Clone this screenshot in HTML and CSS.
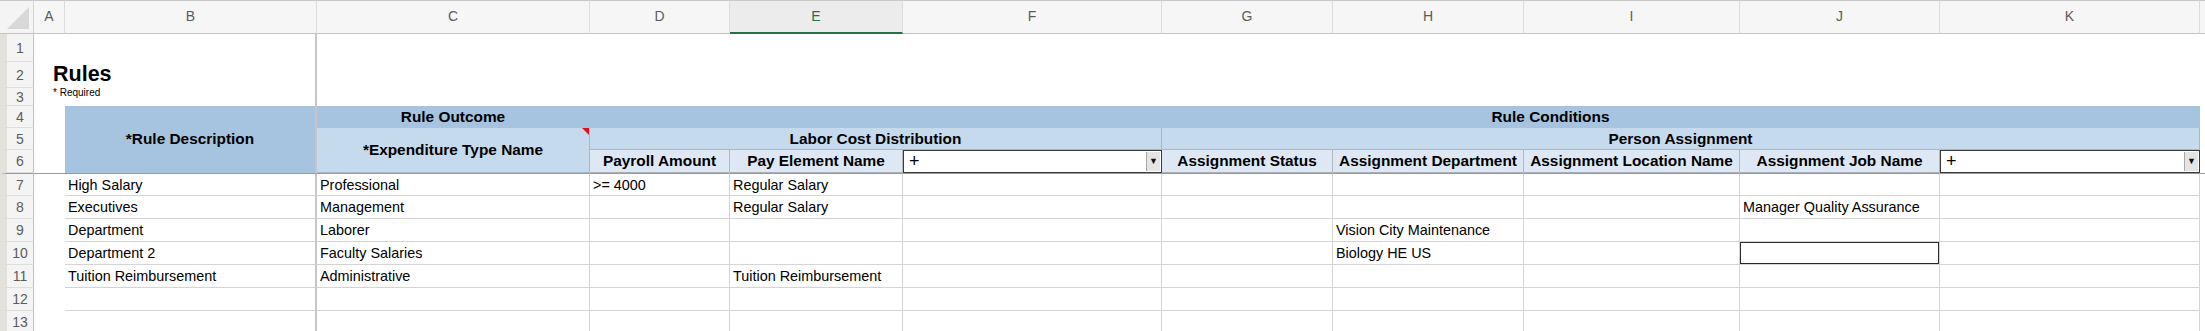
FILE: index.html
```html
<!DOCTYPE html>
<html lang="en">
<head>
  <meta charset="UTF-8" />
  <title>Rules</title>
  <link rel="stylesheet" href="styles.css">
</head>
<body>
  <div class="sheet" id="sheet">
    <!-- column letters -->
    <div class="corner"><span class="corner-tri"></span></div>
    <div class="col-hdr">A</div>
    <div class="col-hdr">B</div>
    <div class="col-hdr">C</div>
    <div class="col-hdr">D</div>
    <div class="col-hdr sel">E</div>
    <div class="col-hdr">F</div>
    <div class="col-hdr">G</div>
    <div class="col-hdr">H</div>
    <div class="col-hdr">I</div>
    <div class="col-hdr">J</div>
    <div class="col-hdr">K</div>
    <div class="col-hdr end"></div>

    <!-- row 1 -->
    <div class="row-hdr">1</div>
    <div class="blank"></div><div class="blank frz"></div><div class="blank wide"></div>

    <!-- row 2 -->
    <div class="row-hdr">2</div>
    <div class="blank"><span class="title">Rules</span></div><div class="blank frz"></div><div class="blank wide"></div>

    <!-- row 3 -->
    <div class="row-hdr">3</div>
    <div class="blank"><span class="required">* Required</span></div><div class="blank frz"></div><div class="blank wide"></div>

    <!-- row 4 -->
    <div class="row-hdr">4</div>
    <div class="blank"></div>
    <div class="head dark frz tall3">*Rule Description</div>
    <div class="head dark">Rule Outcome</div>
    <div class="head dark span3"></div>
    <div class="head dark span4">Rule Conditions</div>
    <div class="head dark"></div>
    <div class="blank"></div>

    <!-- row 5 -->
    <div class="row-hdr">5</div>
    <div class="blank"></div>
    <div class="head mid tall2 comment">*Expenditure Type Name</div>
    <div class="head mid span3">Labor Cost Distribution</div>
    <div class="head mid span5">Person Assignment</div>
    <div class="blank"></div>

    <!-- row 6 -->
    <div class="row-hdr">6</div>
    <div class="blank"></div>
    <div class="head light">Payroll Amount</div>
    <div class="head light">Pay Element Name</div>
    <div class="picker"><span>+</span><span class="arrow">&#9660;</span></div>
    <div class="head light">Assignment Status</div>
    <div class="head light">Assignment Department</div>
    <div class="head light">Assignment Location Name</div>
    <div class="head light">Assignment Job Name</div>
    <div class="picker"><span>+</span><span class="arrow">&#9660;</span></div>
    <div class="blank"></div>
  </div>

  <script>
    // lignes de données (colonnes B..K)
    const rows = [
      ["High Salary", "Professional", ">= 4000", "Regular Salary", "", "", "", "", "", ""],
      ["Executives", "Management", "", "Regular Salary", "", "", "", "", "Manager Quality Assurance", ""],
      ["Department", "Laborer", "", "", "", "", "Vision City Maintenance", "", "", ""],
      ["Department 2", "Faculty Salaries", "", "", "", "", "Biology HE US", "", "", ""],
      ["Tuition Reimbursement", "Administrative", "", "Tuition Reimbursement", "", "", "", "", "", ""],
      ["", "", "", "", "", "", "", "", "", ""],
      ["", "", "", "", "", "", "", "", "", ""]
    ];

    const sheet = document.getElementById("sheet");
    rows.forEach((cells, i) => {
      const num = i + 7;
      const first = num === 7 ? " first" : "";
      let html = `<div class="row-hdr${first}">${num}</div><div class="blank${first}"></div>`;
      cells.forEach((txt, j) => {
        let cls = "cell" + first;
        if (j === 0) cls += " frz";
        if (num === 10 && j === 8) cls += " active";
        html += `<div class="${cls}">${txt}</div>`;
      });
      html += `<div class="blank${first}"></div>`;
      sheet.insertAdjacentHTML("beforeend", html);
    });
  </script>
</body>
</html>
```

FILE: styles.css
```css
body {
  margin: 0;
  padding: 0;
  background-color: #fff;
  font-family: 'Liberation Sans', Arial, sans-serif;
  color: #000;
}

.sheet {
  display: grid;
  grid-template-columns: 34px 31px 252px 273px 140px 173px 259px 171px 191px 216px 200px 260px 5px;
  grid-template-rows: 34px 28px 26px 18px 22px 22px 23px repeat(7, 23px);
  width: 2205px;
  height: 331px;
  overflow: hidden;
}

.sheet > div {
  box-sizing: border-box;
  min-width: 0;
  white-space: nowrap;
}

/* en-têtes de colonnes */
.corner {
  background-color: #f4f4f4;
  border-top: 1px solid #c8c8c8;
  border-right: 1px solid #d4d4d4;
  border-bottom: 1px solid #c2c2c2;
  position: relative;
}

.corner-tri {
  position: absolute;
  right: 4px;
  bottom: 4px;
  width: 0;
  height: 0;
  border-left: 22px solid transparent;
  border-bottom: 22px solid #d8d8d8;
}

.col-hdr {
  background-color: #f6f6f6;
  border-top: 1px solid #c8c8c8;
  border-right: 1px solid #dcdcdc;
  border-bottom: 1px solid #c2c2c2;
  color: #5c5c5c;
  font-size: 14px;
  text-align: center;
  line-height: 31px;
}

.col-hdr.sel {
  background-color: #ececec;
  color: #217346;
  border-bottom: 2px solid #217346;
}

.col-hdr.end {
  border-right: none;
}

/* numéros de ligne */
.row-hdr {
  background-color: #f4f4f4;
  border-left: 7px solid #e3e1dc;
  border-right: 1px solid #c2c2c2;
  border-bottom: 1px solid #dedede;
  color: #5c5c5c;
  font-size: 14px;
  display: flex;
  align-items: center;
  justify-content: center;
}

.row-hdr.first,
.blank.first {
  border-top: 1px solid #9a9a9a;
}

.blank {
  position: relative;
}

.blank.wide {
  grid-column: span 10;
}

.frz {
  border-right: 2px solid #c6c6c6;
}

.title {
  position: absolute;
  z-index: 1;
  left: 19px;
  bottom: 1px;
  font-size: 21.5px;
  font-weight: bold;
  line-height: 26px;
}

.required {
  position: absolute;
  z-index: 1;
  left: 19px;
  top: -3px;
  font-size: 10px;
  line-height: 16px;
}

/* bandeau bleu */
.head {
  font-size: 15.4px;
  font-weight: bold;
  display: flex;
  align-items: center;
  justify-content: center;
  border-right: 1px solid #b9c7d4;
  border-bottom: 1px solid #b9c7d4;
}

.head.dark {
  background-color: #a6c4e0;
  border-color: #a6c4e0;
}

.head.mid {
  background-color: #c6daed;
  border-right-color: #a9b8c6;
  border-bottom-color: #a9b8c6;
}

.head.light {
  background-color: #dde8f4;
  border-right-color: #b0b8c0;
  border-bottom-color: #a9b0b8;
}

.head.frz {
  border-right: 2px solid #c6c6c6;
}

.tall3 {
  grid-row: span 3;
}

.tall2 {
  grid-row: span 2;
}

.span3 {
  grid-column: span 3;
}

.span4 {
  grid-column: span 4;
}

.span5 {
  grid-column: span 5;
}

.comment {
  position: relative;
}

.comment::after {
  content: "";
  position: absolute;
  top: 0;
  right: 0;
  border-top: 7px solid #e0101a;
  border-left: 7px solid transparent;
}

/* liste déroulante */
.picker {
  background-color: #fff;
  border: 1px solid #3a3a3a;
  display: flex;
  align-items: center;
  justify-content: space-between;
  font-size: 18px;
  padding-left: 5px;
}

.picker .arrow {
  width: 13px;
  height: 19px;
  margin-right: 1px;
  background-color: #e4e4e4;
  border-left: 1px solid #a8a8a8;
  color: #111;
  font-size: 9px;
  line-height: 19px;
  text-align: center;
}

/* cellules de données */
.cell {
  border-right: 1px solid #d4d4d4;
  border-bottom: 1px solid #d4d4d4;
  font-size: 14.4px;
  line-height: 22px;
  padding: 0 3px;
  overflow: hidden;
}

.cell.first {
  border-top: 1px solid #9a9a9a;
}

.cell.frz {
  border-right: 2px solid #c6c6c6;
}

.cell.active {
  box-shadow: inset 0 0 0 1px #2b2b2b;
}
```
